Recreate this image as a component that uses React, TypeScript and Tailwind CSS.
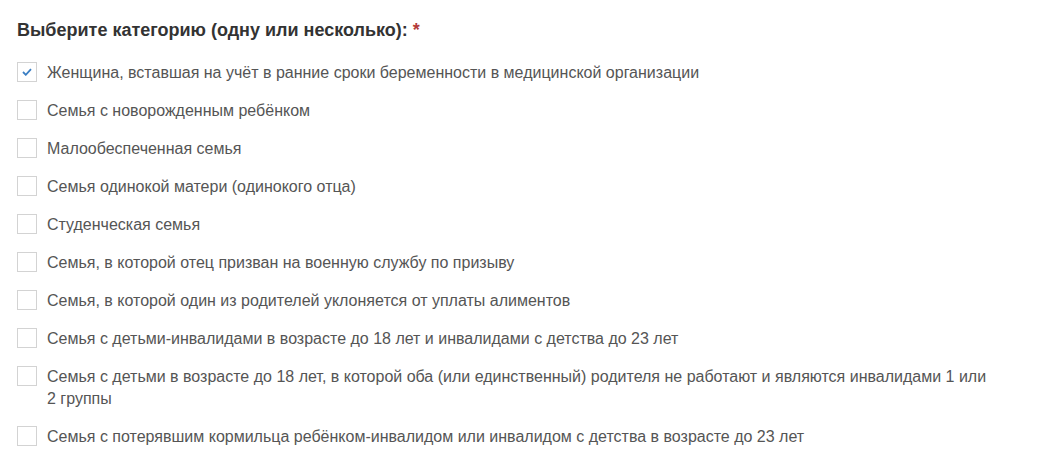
const items: { label: string; checked?: boolean }[] = [
  { label: "Женщина, вставшая на учёт в ранние сроки беременности в медицинской организации", checked: true },
  { label: "Семья с новорожденным ребёнком" },
  { label: "Малообеспеченная семья" },
  { label: "Семья одинокой матери (одинокого отца)" },
  { label: "Студенческая семья" },
  { label: "Семья, в которой отец призван на военную службу по призыву" },
  { label: "Семья, в которой один из родителей уклоняется от уплаты алиментов" },
  { label: "Семья с детьми-инвалидами в возрасте до 18 лет и инвалидами с детства до 23 лет" },
  {
    label:
      "Семья с детьми в возрасте до 18 лет, в которой оба (или единственный) родителя не работают и являются инвалидами 1 или 2 группы",
  },
  { label: "Семья с потерявшим кормильца ребёнком-инвалидом или инвалидом с детства в возрасте до 23 лет" },
];

function Box({ checked }: { checked?: boolean }) {
  return (
    <span className="flex h-[20px] w-[20px] shrink-0 items-center justify-center border border-[#d3d3d3] bg-white">
      {checked && (
        <svg width="10" height="8" viewBox="0 0 10 8" fill="none">
          <path d="M1 4l2.8 2.8L9 1.2" stroke="#3b7fc4" strokeWidth="1.8" />
        </svg>
      )}
    </span>
  );
}

export default function App() {
  return (
    <div className="min-h-screen bg-white px-[17px] pt-[19px] font-['Liberation_Sans',Arial,sans-serif]">
      <h2 className="text-[18px] font-bold leading-[22px] text-[#333]">
        Выберите категорию (одну или несколько): <span className="text-[#b33a3a]">*</span>
      </h2>
      <div className="mt-[21px] flex flex-col gap-[16px]">
        {items.map((it) => (
          <label key={it.label} className="flex items-start gap-[10px]">
            <Box checked={it.checked} />
            <span className="max-w-[948px] text-[16px] leading-[22px] text-[#555]">{it.label}</span>
          </label>
        ))}
      </div>
    </div>
  );
}
